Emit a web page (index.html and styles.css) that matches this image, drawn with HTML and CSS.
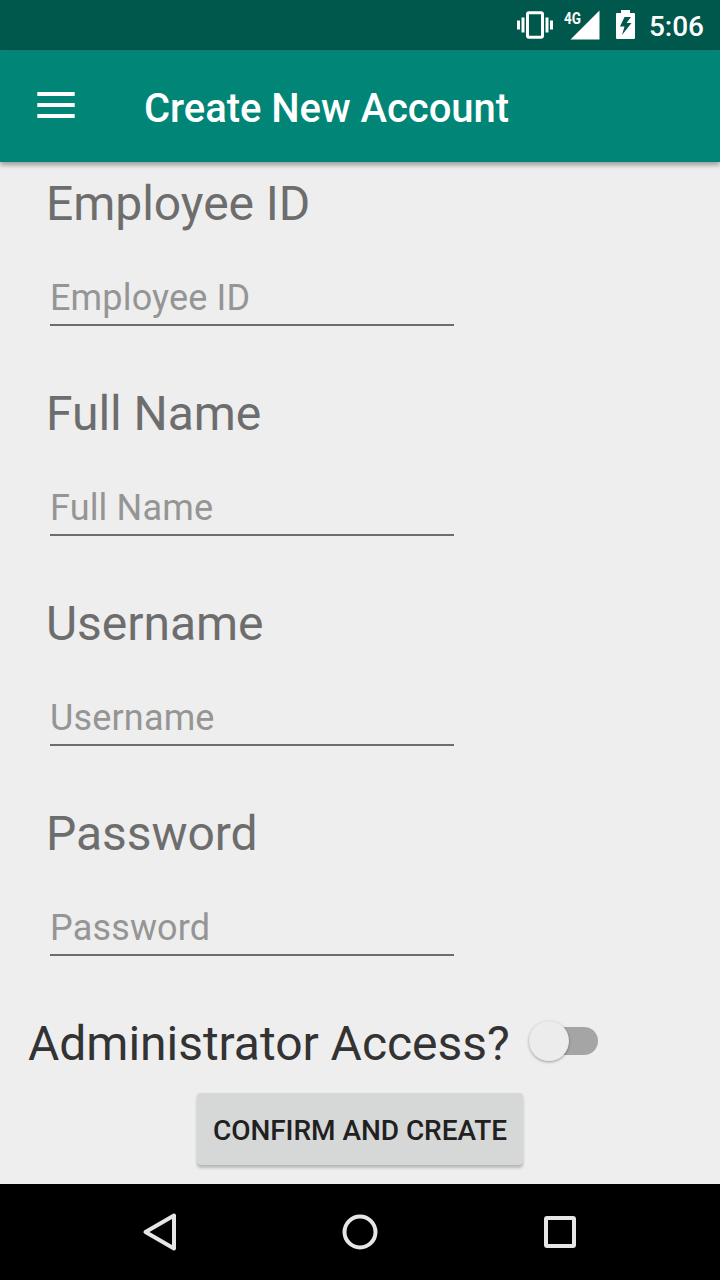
FILE: index.html
```html
<!DOCTYPE html>
<html lang="en">
<head>
<meta charset="utf-8">
<title>Create New Account</title>
<link rel="stylesheet" href="styles.css">
</head>
<body>
<div class="status">
  <svg class="status-icons" width="130" height="50" viewBox="510 0 130 50">
    <path fill="#fff" d="M517 20.500h3v9h-3zM521.500 17.500h3v15h-3zM545.500 17.500h3v15h-3zM550 20.500h3v9h-3z"/>
    <rect x="527.500" y="12.700" width="15" height="24.600" rx="1.500" fill="none" stroke="#fff" stroke-width="3"/>
    <path fill="#fff" d="M599.500 10.500v29h-29z"/>
    <path fill="#fff" fill-rule="evenodd" d="M621 10h9v3h4q1 0 1 1v24q0 1-1 1h-17q-1 0-1-1v-24q0-1 1-1h4zM624.500 17l-4.500 9.500h4.500l-2.500 8.500 9.500-12h-5l4.500-6z"/>
    <text class="network" x="564" y="23.500" textLength="17" lengthAdjust="spacingAndGlyphs">4G</text>
  </svg>
  <span class="clock">5:06</span>
</div>
<header class="toolbar">
  <svg class="menu" width="38" height="26" viewBox="0 0 38 26"><path fill="#fff" d="M.3 0h37.400v4H.3zM.3 11h37.400v4H.3zM.3 22h37.400v4H.3z"/></svg>
  <h1 class="title">Create New Account</h1>
</header>
<main class="form">
  <label class="field"><span class="label">Employee ID</span><input class="input" placeholder="Employee ID"></label>
  <label class="field"><span class="label">Full Name</span><input class="input" placeholder="Full Name"></label>
  <label class="field"><span class="label">Username</span><input class="input" placeholder="Username"></label>
  <label class="field"><span class="label">Password</span><input class="input" placeholder="Password"></label>
  <div class="admin"><span class="admin-label">Administrator Access?</span><span class="switch"><span class="thumb"></span></span></div>
  <button class="confirm">CONFIRM AND CREATE</button>
</main>
<nav class="navbar">
  <svg width="720" height="96" viewBox="0 1184 720 96" fill="none" stroke="#e6e6e6" stroke-width="4">
    <path stroke-linejoin="round" d="M174 1215.500v33l-28.500-16.500z"/>
    <circle cx="360" cy="1232" r="15.500"/>
    <rect x="546" y="1218" width="28" height="28" rx="1"/>
  </svg>
</nav>
</body>
</html>
```
FILE: styles.css
```css
* { box-sizing: border-box; }
body {
  margin: 0;
  width: 720px;
  height: 1280px;
  display: flex;
  flex-direction: column;
  overflow: hidden;
  background: #eee;
  font-family: Roboto, sans-serif;
}
.status {
  height: 50px;
  flex: none;
  display: flex;
  justify-content: flex-end;
  padding-right: 16px;
  background: #00574b;
  color: #fff;
}
.status-icons { margin-right: 9px; }
.network { font-size: 16px; font-weight: 700; fill: #fff; }
.clock { font-size: 28px; font-weight: 500; line-height: 54px; }
.toolbar {
  height: 112px;
  flex: none;
  display: flex;
  align-items: center;
  gap: 69px;
  padding-left: 37px;
  background: #008577;
  box-shadow: 0 3px 5px rgba(0, 0, 0, .35);
}
.menu { margin-bottom: 2px; }
.title { margin: 5px 0 0; color: #fff; font-size: 40px; font-weight: 500; line-height: 48px; letter-spacing: -.04px; }
.form { height: 1022px; flex: none; display: flex; flex-direction: column; padding-top: 14px; }
.field { height: 210px; flex: none; display: flex; flex-direction: column; padding-left: 46px; }
.label { height: 56px; font-size: 48px; line-height: 56px; letter-spacing: -.05px; color: #6d6d6d; }
.input {
  width: 404px;
  height: 51px;
  margin: 43px 0 0 4px;
  padding: 0 0 4px;
  border: 0;
  border-bottom: 2px solid #6d6d6d;
  border-radius: 0;
  outline: 0;
  background: transparent;
  font: 36px Roboto, sans-serif;
  letter-spacing: .16px;
}
.input::placeholder { color: #959595; opacity: 1; }
.admin { height: 56px; flex: none; display: flex; align-items: center; padding-left: 28px; }
.admin-label { font-size: 48px; line-height: 56px; letter-spacing: -.03px; color: #333; }
.switch { width: 68px; height: 28px; margin: 0 0 6px 20px; border-radius: 14px; background: #a5a5a5; }
.thumb { display: block; width: 40px; height: 40px; margin: -6px 0 0 -1px; border-radius: 50%; background: #ececec; box-shadow: 0 1px 3px rgba(0, 0, 0, .35); }
.confirm {
  width: 326px;
  height: 72px;
  flex: none;
  margin: 21px auto 0;
  padding: 2px 0 0;
  border: 0;
  border-radius: 4px;
  background: #d6d7d7;
  box-shadow: 0 3px 3px rgba(0, 0, 0, .22), 0 0 1px rgba(0, 0, 0, .15);
  color: #202020;
  font: 500 28px Roboto, sans-serif;
  letter-spacing: -.05px;
}
.navbar { height: 96px; flex: none; background: #000; }
.navbar svg { display: block; }
```
